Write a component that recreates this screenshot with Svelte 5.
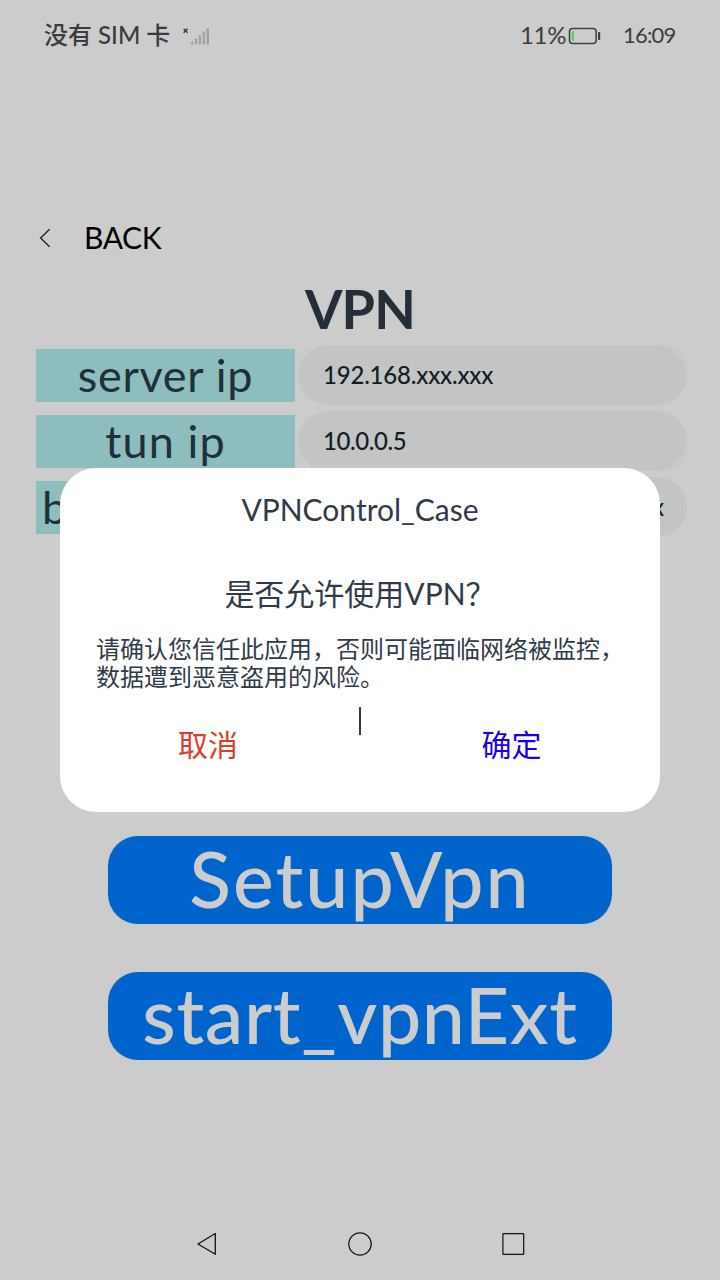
<script>
  const fields = [
    { label: 'server ip', value: '192.168.xxx.xxx', cls: 'server' },
    { label: 'tun ip', value: '10.0.0.5', cls: 'tun' },
    { label: 'b', value: 'x', cls: 'covered' },
  ];
</script>

<div class="screen">
  <header class="status">
    <span class="sim">没有 SIM 卡</span>
    <svg class="signal" width="30" height="24" viewBox="0 0 30 24">
      <path d="M1.6 2.8l4 4M5.6 2.8l-4 4" stroke="#333" stroke-width="1.3" fill="none" />
      <g fill="#a3a3a3">
        <rect x="9" y="15.5" width="2.4" height="3" rx="1" />
        <rect x="12.8" y="12.3" width="2.4" height="6.2" rx="1" />
        <rect x="16.6" y="9" width="2.4" height="9.5" rx="1" />
        <rect x="20.6" y="5.5" width="2.4" height="13" rx="1" />
        <rect x="24.4" y="2.2" width="2.6" height="16.3" rx="1" />
      </g>
    </svg>
    <span class="percent">11%</span>
    <svg class="battery" width="34" height="18" viewBox="0 0 34 18">
      <rect x="1.5" y="1.6" width="26.6" height="14.8" rx="3" fill="none" stroke="#404040" stroke-width="1.5" />
      <rect x="3.6" y="4" width="2.4" height="10" rx="0.8" fill="#5fce70" />
      <rect x="30" y="5" width="2.2" height="8" rx="0.8" fill="#404040" />
    </svg>
    <span class="time">16:09</span>
  </header>

  <div class="nav">
    <svg width="14" height="22" viewBox="0 0 14 22">
      <path d="M11.6 2.2L2.6 11l9 8.8" fill="none" stroke="#222" stroke-width="1.4" />
    </svg>
    <span>BACK</span>
  </div>

  <h1>VPN</h1>

  <div class="form">
    {#each fields as f}
      <div class="row {f.cls}">
        <div class="label">{f.label}</div>
        <div class="input">{f.value}</div>
      </div>
    {/each}
  </div>

  <div class="actions">
    <button class="setup">SetupVpn</button>
    <button class="start">start_vpnExt</button>
  </div>

  <footer>
    <svg width="24" height="26" viewBox="0 0 24 26">
      <path d="M20.3 2.5v20.8L3 13z" fill="none" stroke="#111" stroke-width="1.3" stroke-linejoin="round" />
    </svg>
    <svg width="26" height="26" viewBox="0 0 26 26">
      <circle cx="13" cy="13" r="11.2" fill="none" stroke="#111" stroke-width="1.2" />
    </svg>
    <svg width="26" height="26" viewBox="0 0 26 26">
      <rect x="2.9" y="2.6" width="20.8" height="20.8" rx="0.6" fill="none" stroke="#111" stroke-width="1.2" />
    </svg>
  </footer>

  <div class="dialog">
    <div class="title">VPNControl_Case</div>
    <div class="question">是否允许使用VPN？</div>
    <p>请确认您信任此应用，否则可能面临网络被监控，<br />数据遭到恶意盗用的风险。</p>
    <div class="choices">
      <span class="cancel">取消</span>
      <i></i>
      <span class="ok">确定</span>
    </div>
  </div>
</div>

<style>
  :global(body) {
    background: #ccc;
  }
  .screen {
    position: relative;
    box-sizing: border-box;
    width: 720px;
    height: 1280px;
    overflow: hidden;
    display: flex;
    flex-direction: column;
    background: #ccc;
    font-family: Lato, 'Noto Sans CJK SC', sans-serif;
    white-space: nowrap;
  }
  .status {
    display: flex;
    align-items: center;
    height: 70px;
    padding: 0 44px;
    color: #3c3c3c;
    font-size: 24px;
    font-weight: 500;
    line-height: 30px;
  }
  .sim {
    width: 126px;
    margin-right: 12px;
  }
  .signal {
    margin-top: 5px;
  }
  .percent {
    width: 48px;
    margin-left: auto;
    font-weight: 400;
    letter-spacing: -0.3px;
  }
  .battery {
    margin: 2px 21px 0 0;
  }
  .time {
    width: 53px;
    font-size: 22px;
    font-weight: 400;
    letter-spacing: -0.8px;
  }
  .nav {
    display: flex;
    align-items: center;
    height: 50px;
    margin-top: 142px;
    padding: 0 38px;
    gap: 32px;
    font-size: 30px;
    line-height: 50px;
    letter-spacing: -0.4px;
    color: #000;
  }
  .nav svg {
    margin-top: 1px;
  }
  h1 {
    height: 66px;
    margin: 14px 0 3px;
    text-align: center;
    font-size: 54px;
    line-height: 66px;
    font-weight: 700;
    letter-spacing: -0.8px;
    color: #242e38;
  }
  .form {
    display: flex;
    flex-direction: column;
    gap: 6px;
    padding: 0 33px 0 36px;
  }
  .row {
    display: flex;
    align-items: center;
    gap: 3px;
    height: 60px;
  }
  .label {
    width: 259px;
    height: 53px;
    background: #8dbdbc;
    text-align: center;
    color: #20303a;
    font-size: 45px;
    line-height: 52px;
    letter-spacing: 0.7px;
  }
  .tun .label {
    letter-spacing: 1.1px;
  }
  .input {
    flex: 1;
    box-sizing: border-box;
    height: 60px;
    padding: 0 25px;
    border-radius: 30px;
    background: #c3c5c4;
    color: #141c24;
    font-size: 24px;
    line-height: 59px;
    font-weight: 500;
    letter-spacing: -0.2px;
  }
  .tun .input {
    letter-spacing: -0.4px;
  }
  .covered .label {
    box-sizing: border-box;
    padding-left: 6px;
    text-align: left;
  }
  .covered .input {
    padding-right: 23px;
    text-align: right;
  }
  .actions {
    display: flex;
    flex-direction: column;
    align-items: center;
    gap: 48px;
    margin-top: 299px;
  }
  button {
    width: 504px;
    height: 88px;
    padding: 0 0 4px;
    border: 0;
    border-radius: 30px;
    background: #0064cd;
    color: #ccc;
    font: 500 77px/84px Lato, sans-serif;
  }
  .setup {
    letter-spacing: 2px;
  }
  .start {
    letter-spacing: 0.6px;
  }
  footer {
    display: flex;
    align-items: center;
    justify-content: space-between;
    margin-top: auto;
    height: 72px;
    padding: 0 194px 0 195px;
  }
  .dialog {
    position: absolute;
    left: 60px;
    top: 468px;
    width: 600px;
    height: 344px;
    border-radius: 36px;
    background: #fff;
    color: #303b47;
    display: flex;
    flex-direction: column;
  }
  .title {
    height: 83px;
    line-height: 83px;
    font-size: 30px;
    text-align: center;
  }
  .question {
    height: 84px;
    line-height: 84px;
    font-size: 30px;
    text-align: center;
  }
  p {
    margin: 0;
    padding-left: 36px;
    font-size: 24px;
    line-height: 28px;
  }
  .choices {
    display: grid;
    grid-template-columns: 296px 5px 299px;
    margin-top: 16px;
    font-size: 30px;
    line-height: 75px;
    text-align: center;
  }
  .choices i {
    justify-self: center;
    width: 2px;
    height: 28px;
    margin-left: 3px;
    background: #303b47;
  }
  .cancel {
    color: #d94028;
  }
  .ok {
    padding-left: 2px;
    color: #1a00e8;
  }
</style>
